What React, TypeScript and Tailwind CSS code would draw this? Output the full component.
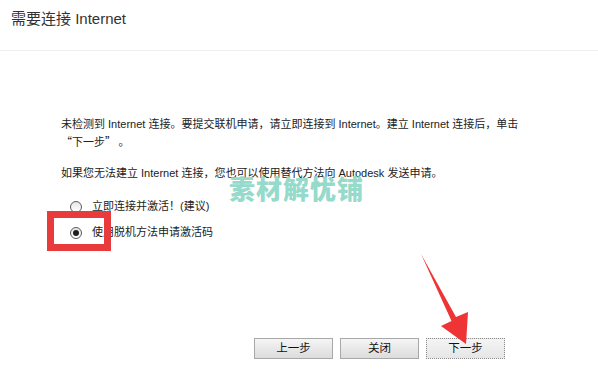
import React from "react";

const font = {
  fontFamily: '"Liberation Sans", "Noto Sans CJK SC", sans-serif',
};

const cjk = { fontFamily: '"Noto Sans CJK SC", sans-serif' };

function Radio({ checked, label }: { checked?: boolean; label: string }) {
  return (
    <label className="flex h-[17px] items-center gap-[10px] pl-[9px]">
      <span className="flex h-[12px] w-[12px] items-center justify-center rounded-full border border-[#5a5a5a] bg-gradient-to-b from-[#e6e6e6] to-white">
        {checked && <span className="h-[6px] w-[6px] rounded-full bg-[#1e1e1e]" />}
      </span>
      <span>{label}</span>
    </label>
  );
}

function Btn({ children, focus }: { children: React.ReactNode; focus?: boolean }) {
  return (
    <button
      className={
        "h-[21px] w-[79px] border text-[11.5px] leading-none text-[#111] " +
        (focus
          ? "border-dotted border-[#8a8a8a] bg-gradient-to-b from-[#f4f4f4] to-[#e6e6e6]"
          : "border-[#a8a8a8] bg-gradient-to-b from-[#f5f5f5] to-[#dcdcdc]")
      }
    >
      {children}
    </button>
  );
}

export default function App() {
  return (
    <div className="relative flex h-[371px] w-[598px] flex-col overflow-hidden bg-white text-[#222]" style={font}>
      <div className="h-[51px] border-b border-[#efefef] px-[11px] pt-[10px] text-[15px] leading-[18px] text-[#333]">
        需要连接 Internet
      </div>

      <div className="flex flex-col pl-[61px] pt-[65px] text-[11px] leading-[17px]">
        <p className="whitespace-nowrap">
          未检测到 Internet 连接。要提交联机申请，请立即连接到 Internet。建立 Internet 连接后，单击
          <br />
          <span style={cjk}>“下一步” 。</span>
        </p>
        <p className="mt-[14px] whitespace-nowrap">如果您无法建立 Internet 连接，您也可以使用替代方法向 Autodesk 发送申请。</p>
        <div className="mt-[16px] flex flex-col gap-[9px]">
          <Radio label="立即连接并激活！(建议)" />
          <Radio checked label="使用脱机方法申请激活码" />
        </div>
      </div>

      <div className="mt-auto flex justify-end gap-[7px] pb-[12px] pr-[93px]">
        <Btn>上一步</Btn>
        <Btn>关闭</Btn>
        <Btn focus>下一步</Btn>
      </div>

      {/* watermark */}
      <div className="pointer-events-none absolute left-[229px] top-[173px] text-[26px] font-black leading-[30px] tracking-[1px] text-[#96dacb]" style={cjk}>
        素材解忧铺
      </div>

      {/* annotation box */}
      <div className="pointer-events-none absolute left-[47px] top-[211px] h-[40px] w-[64px] border-[7px] border-[#e83b3b]" />

      {/* annotation arrow */}
      <svg className="pointer-events-none absolute left-0 top-0" width="598" height="371" viewBox="0 0 598 371">
        <polygon points="421,254 456,317 468,312 466,344 441,326 451.5,321" fill="#ee3434" />
      </svg>
    </div>
  );
}
